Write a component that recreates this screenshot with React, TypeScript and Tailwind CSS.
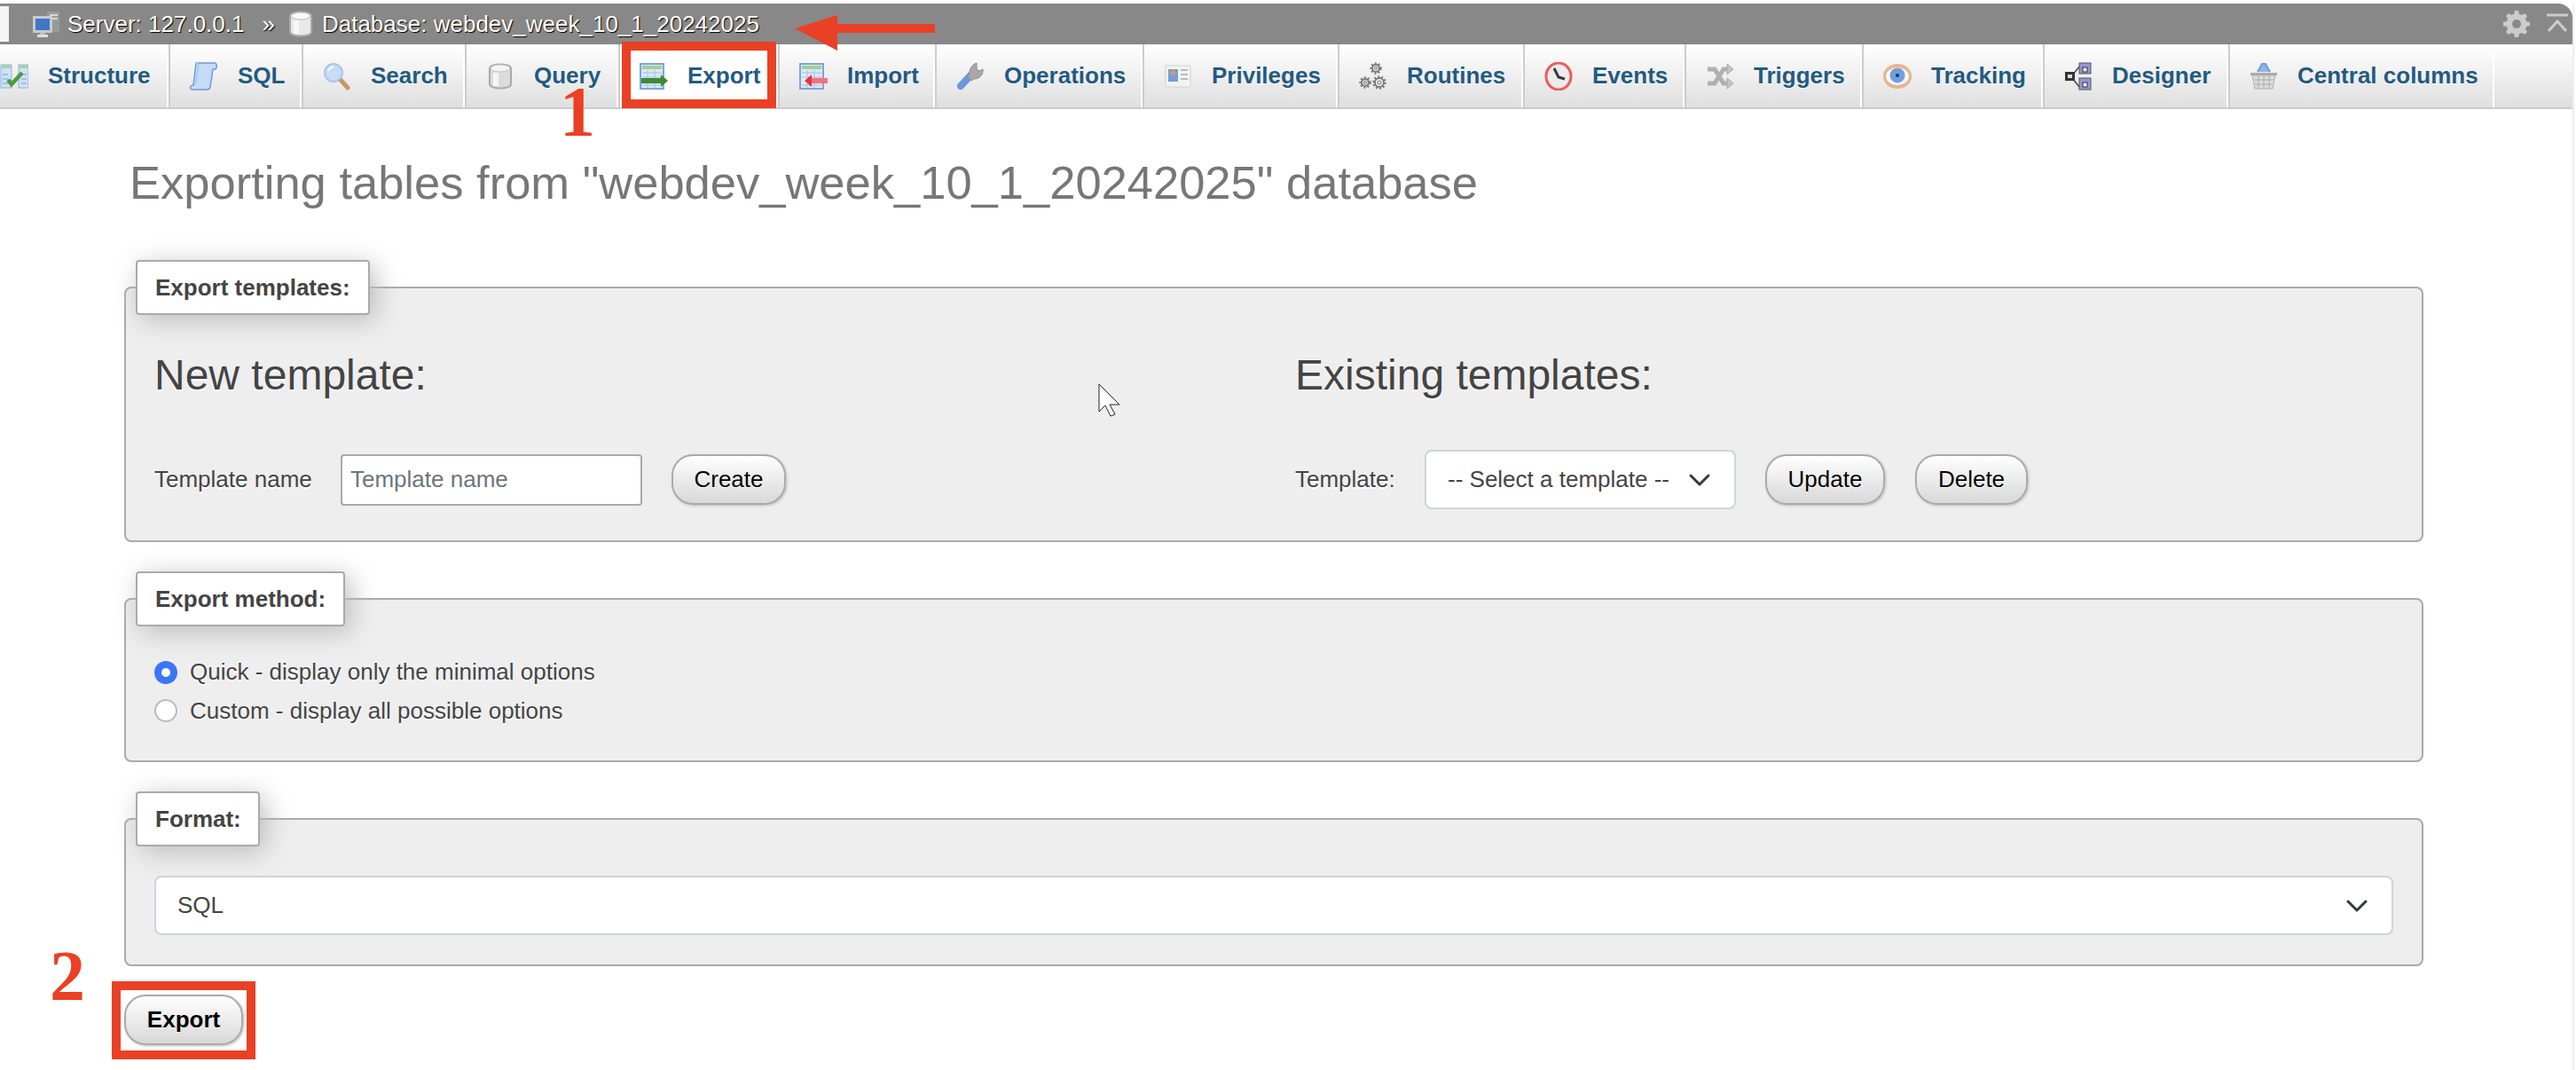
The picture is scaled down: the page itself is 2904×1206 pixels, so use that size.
import React from 'react';

const ico = 'w-8 h-8 shrink-0 blur-[0.4px]';

const ServerIcon = () => (
    <svg viewBox="0 0 32 32" className={ico}>
        <rect x="17" y="2" width="14" height="23" fill="#9a9a9a" />
        <rect x="20" y="5" width="9" height="2" fill="#d8d8d8" />
        <rect x="20" y="9" width="9" height="2" fill="#d8d8d8" />
        <rect x="26" y="14" width="3" height="3" fill="#5cb85c" />
        <rect x="1" y="7" width="22" height="19" fill="#c9c9c9" />
        <rect x="4" y="10" width="16" height="13" fill="#3f78c4" />
        <rect x="9" y="26" width="6" height="2" fill="#bbb" />
        <rect x="6" y="28" width="12" height="3" fill="#e0e0e0" />
    </svg>
);

const DbIcon = ({ light = false }: { light?: boolean }) => (
    <svg viewBox="0 0 32 32" className={ico}>
        <path d="M4 7c0-6 24-6 24 0v18c0 6-24 6-24 0z" fill={light ? '#dcdcdc' : '#e8e8e8'} stroke={light ? '#aaa' : '#aaa'} strokeWidth="2" />
        <ellipse cx="16" cy="7" rx="11" ry="4" fill={light ? '#f4f4f4' : '#fafafa'} stroke={light ? '#c4c4c4' : '#bbb'} />
        <rect x="8" y="12" width="6" height="15" fill="#fff" opacity="0.7" />
    </svg>
);

const StructureIcon = () => (
    <svg viewBox="0 0 32 32" className={ico}>
        <rect x="1" y="3" width="12" height="26" fill="#cfe0f6" stroke="#8fb2e0" />
        <rect x="21" y="3" width="11" height="26" fill="#cfe0f6" stroke="#8fb2e0" />
        <rect x="2" y="4" width="10" height="3" fill="#a6d59a" />
        <rect x="22" y="4" width="9" height="3" fill="#a6d59a" />
        <path d="M24 14h6M24 19h6M24 24h6M3 14h6M3 19h6M3 24h6" stroke="#8fb2e0" strokeWidth="1.5" />
        <path d="M9 20l4 5 12-13" fill="none" stroke="#4f9a3a" strokeWidth="4.500" />
    </svg>
);

const SqlIcon = () => (
    <svg viewBox="0 0 32 32" className={ico}>
        <path d="M7 1h21c3 0 3 7 0 7h-2l-3 20c-.5 2-2 3-4 3H3c-2 0-3-2-2-4l3-1z" fill="#c6dbf6" stroke="#6f9bd8" strokeWidth="1.5" />
        <path d="M7 1c3 0 3 4 2 8L6 26" fill="none" stroke="#a8c6ec" strokeWidth="1.5" />
    </svg>
);

const SearchIcon = () => (
    <svg viewBox="0 0 32 32" className={ico}>
        <path d="M19 19l9 10" stroke="#c49a62" strokeWidth="5" strokeLinecap="round" />
        <circle cx="12" cy="12" r="10" fill="#c7dcf6" stroke="#a9c6ea" strokeWidth="2" />
        <path d="M6 10c1-3 3-4 6-5" stroke="#fff" strokeWidth="2" fill="none" />
    </svg>
);

const ExportIcon = () => (
    <svg viewBox="0 0 32 32" className={ico}>
        <rect x="1" y="2" width="26" height="28" fill="#dde8f8" stroke="#7fa3d6" strokeWidth="2" />
        <rect x="3" y="4" width="22" height="4" fill="#9fd28e" />
        <path d="M3 12h22M3 17h22M3 26h22M9 9v20M17 9v20" stroke="#a6c0e6" />
        <rect x="2" y="18" width="23" height="6" fill="#3f8a35" />
        <path d="M24 14l8 7-8 7z" fill="#3f8a35" />
    </svg>
);

const ImportIcon = () => (
    <svg viewBox="0 0 32 32" className={ico}>
        <rect x="1" y="2" width="26" height="28" fill="#dde8f8" stroke="#7fa3d6" strokeWidth="2" />
        <rect x="3" y="4" width="22" height="4" fill="#9fd28e" />
        <path d="M3 12h22M3 17h22M3 26h22M9 9v20M17 9v20" stroke="#a6c0e6" />
        <rect x="13" y="18" width="19" height="6" fill="#f2727c" />
        <path d="M14 14l-8 7 8 7z" fill="#e8333f" />
    </svg>
);

const WrenchIcon = () => (
    <svg viewBox="0 0 32 32" className={ico}>
        <path d="M17 14L5 27" stroke="#6b97df" strokeWidth="8" strokeLinecap="round" />
        <path d="M15 12c0-5 3-9 8-11v7l3 2 4-2c1 6-4 11-10 11l-3 2-4-5z" fill="#a8a8a8" stroke="#8a8a8a" />
    </svg>
);

const PrivilegesIcon = () => (
    <svg viewBox="0 0 32 32" className={ico}>
        <path d="M2 4h28v23l-3 2-2-2-3 2-3-2-3 2-3-2-3 2-3-2-3 2-2-2z" fill="#f3f3f3" stroke="#d0d0d0" />
        <rect x="5" y="8" width="11" height="14" fill="#6f9fdc" />
        <circle cx="10.500" cy="12" r="3" fill="#d99a63" />
        <path d="M19 9h8M19 14h8M19 19h8" stroke="#b9b9b9" strokeWidth="2" />
    </svg>
);

const Gear = ({ x, y, r }: { x: number; y: number; r: number }) => (
    <g>
        <circle cx={x} cy={y} r={r} fill="none" stroke="#7c7c7c" strokeWidth="2" />
        <circle cx={x} cy={y} r={r + 1.500} fill="none" stroke="#7c7c7c" strokeWidth="2.500" strokeDasharray="2 2" />
        <circle cx={x} cy={y} r={r / 2.500} fill="#eee" stroke="#777" />
    </g>
);

const RoutinesIcon = () => (
    <svg viewBox="0 0 32 32" className={ico}>
        <Gear x={19} y={7} r={4} />
        <Gear x={7} y={23} r={4} />
        <Gear x={23} y={23} r={5} />
    </svg>
);

const EventsIcon = () => (
    <svg viewBox="0 0 32 32" className={ico}>
        <ellipse cx="16" cy="16" rx="14" ry="15" fill="#ececec" stroke="#ef5b5b" strokeWidth="3" />
        <path d="M11 7l5 10 7 2" fill="none" stroke="#3b3b3b" strokeWidth="3" />
    </svg>
);

const TriggersIcon = () => (
    <svg viewBox="0 0 32 32" className={ico}>
        <path d="M2 8h8l10 16h5M2 24h8L20 8h5" fill="none" stroke="#b0b0b0" strokeWidth="5" />
        <path d="M24 2l7 6-7 6zM24 18l7 6-7 6z" fill="#c5c5c5" stroke="#a9a9a9" />
    </svg>
);

const TrackingIcon = () => (
    <svg viewBox="0 0 32 32" className={ico}>
        <ellipse cx="16" cy="16" rx="16" ry="14" fill="#e8b48c" />
        <ellipse cx="16" cy="16" rx="13" ry="10" fill="#f7f7f7" />
        <circle cx="16" cy="15" r="8.500" fill="#6f9fe0" />
        <circle cx="16" cy="15" r="2" fill="#1f2f4f" />
    </svg>
);

const DesignerIcon = () => (
    <svg viewBox="0 0 32 32" className={ico}>
        <path d="M9 15L18 4M9 18l9 11" stroke="#444" strokeWidth="1.500" fill="none" />
        <rect x="1" y="11" width="11" height="10" fill="#333" />
        <rect x="4" y="14" width="5" height="4" fill="#ddd" />
        <rect x="17" y="1" width="13" height="12" fill="#9c95d6" stroke="#555" />
        <rect x="21" y="6" width="5" height="5" fill="#eee" stroke="#333" />
        <rect x="17" y="18" width="13" height="13" fill="#9c95d6" stroke="#555" />
        <rect x="21" y="23" width="5" height="5" fill="#eee" stroke="#333" />
    </svg>
);

const BasketIcon = () => (
    <svg viewBox="0 0 32 32" className={ico}>
        <path d="M9 11l5-9h4l5 9" fill="#8eb5e8" stroke="#6f9fdc" strokeWidth="2" />
        <path d="M1 12h30v3H1z" fill="#aaa" />
        <path d="M3 15h26l-3 15H6z" fill="#dcdcdc" stroke="#b0b0b0" />
        <path d="M5 20h22M6 25h20M10 15v15M16 15v15M22 15v15" stroke="#aaa" />
    </svg>
);

const Chevron = () => (
    <svg viewBox="0 0 16 16" className="h-8 w-8 shrink-0" fill="none" stroke="#343a40" strokeWidth="1.500" strokeLinecap="round" strokeLinejoin="round">
        <path d="M3 5.500l5 5 5-5" />
    </svg>
);

const tabs = [
    { label: 'Structure', icon: <StructureIcon />, cls: 'w-[214px] -ml-[24px]' },
    { label: 'SQL', icon: <SqlIcon />, cls: 'w-[150px]' },
    { label: 'Search', icon: <SearchIcon />, cls: 'w-[184px]' },
    { label: 'Query', icon: <DbIcon light />, cls: 'w-[173px]' },
    { label: 'Export', icon: <ExportIcon />, cls: 'w-[180px] bg-white' },
    { label: 'Import', icon: <ImportIcon />, cls: 'w-[177px]' },
    { label: 'Operations', icon: <WrenchIcon />, cls: 'w-[234px]' },
    { label: 'Privileges', icon: <PrivilegesIcon />, cls: 'w-[220px]' },
    { label: 'Routines', icon: <RoutinesIcon />, cls: 'w-[209px]' },
    { label: 'Events', icon: <EventsIcon />, cls: 'w-[182px]' },
    { label: 'Triggers', icon: <TriggersIcon />, cls: 'w-[200px]' },
    { label: 'Tracking', icon: <TrackingIcon />, cls: 'w-[204px]' },
    { label: 'Designer', icon: <DesignerIcon />, cls: 'w-[209px]' },
    { label: 'Central columns', icon: <BasketIcon />, cls: 'w-[300px]' },
];

const Btn = ({ children, cls, bold = false }: { children: React.ReactNode; cls: string; bold?: boolean }) => (
    <button className={`h-[57px] rounded-[24px] border-2 border-[#aaa] bg-gradient-to-b from-white to-[#d8d8d8] text-[26px] text-black [text-shadow:0_1px_0_#fff] shadow-[1px_1px_3px_#bbb] ${bold ? 'font-bold' : ''} ${cls}`}>
        {children}
    </button>
);

const Box = ({ title, legendCls, children }: { title: string; legendCls: string; children: React.ReactNode }) => (
    <fieldset className="rounded-lg border-2 border-[#aaa] bg-[#eee] px-[32px] text-[26px] text-[#444] [text-shadow:0_2px_0_#fff]">
        <legend className={`-ml-[21px] h-[62px] rounded border-2 border-[#aaa] bg-white pl-[20px] text-[26px] leading-[58px] font-bold shadow-[6px_6px_30px_#bbb] [text-shadow:none] ${legendCls}`}>
            {title}
        </legend>
        {children}
    </fieldset>
);

const Radio = ({ on, label }: { on?: boolean; label: string }) => (
    <label className="flex h-[43.500px] items-center gap-[14px]">
        {on ? (
            <span className="flex h-[26px] w-[26px] items-center justify-center rounded-full bg-[#3b76f6]">
                <span className="h-[10px] w-[10px] rounded-full bg-white" />
            </span>
        ) : (
            <span className="h-[26px] w-[26px] rounded-full border-2 border-[#bbb] bg-white" />
        )}
        {label}
    </label>
);

export default function App() {
    return (
        <div className="relative h-[1206px] w-[2904px] overflow-hidden bg-white pt-[4px] font-['Liberation_Sans',Arial,sans-serif]">
            <div className="h-[1202px] w-[2902px] border-r-2 border-[#eee]">
                {/* Breadcrumb */}
                <div className="flex h-[46px] w-[2900px] items-center rounded-tr-2xl bg-[#888] text-[26px] text-white [text-shadow:1px_1px_1px_#000]">
                    <div className="h-[40px] w-[10px] bg-[#f4f4f4]" />
                    <div className="ml-[26px]"><ServerIcon /></div>
                    <span className="ml-[8px]">Server: 127.0.0.1</span>
                    <span className="ml-[20px]">»</span>
                    <div className="ml-[13px]"><DbIcon /></div>
                    <span className="ml-[8px]">Database: webdev_week_10_1_20242025</span>
                    <svg viewBox="0 0 30 30" className="ml-auto h-[30px] w-[30px] blur-[0.4px]" fill="#ccc">
                        <path d="M13 0h4l1 4 3 1 3-2 3 3-2 3 1 3 4 1v4l-4 1-1 3 2 3-3 3-3-2-3 1-1 4h-4l-1-4-3-1-3 2-3-3 2-3-1-3-4-1v-4l4-1 1-3-2-3 3-3 3 2 3-1z" />
                        <circle cx="15" cy="15" r="5" fill="#888" />
                    </svg>
                    <svg viewBox="0 0 24 24" className="mr-[5px] ml-[19px] h-[24px] w-[24px]" fill="none" stroke="#ccc" strokeWidth="3">
                        <path d="M0 2h24M2 20l10-11 10 11" />
                    </svg>
                </div>

                {/* Tabs */}
                <div className="flex h-[73px] w-[2900px] border-b-2 border-[#ccc] bg-gradient-to-b from-white to-[#dfdfdf]">
                    {tabs.map(t => (
                        <div key={t.label} className={`flex shrink-0 items-center gap-[22px] border-r-2 border-l-2 border-r-white border-l-[#ccc] pl-[22px] text-[26px] font-bold whitespace-nowrap text-[#235a81] [text-shadow:0_1px_0_#fff] ${t.cls}`}>
                            {t.icon}
                            {t.label}
                        </div>
                    ))}
                </div>

                <div className="w-[2732px] pl-[140px]">
                    <h2 className="ml-[6px] flex h-[170px] items-center pb-[3px] text-[52.500px] font-normal whitespace-nowrap text-[#777]">
                        Exporting tables from "webdev_week_10_1_20242025" database
                    </h2>

                    <div className="flex flex-col gap-[33px]">
                        <Box title="Export templates:" legendCls="w-[264px]">
                            <div className="grid grid-cols-[1286px_1fr] pt-[40px] pb-[35px]">
                                <div>
                                    <h3 className="h-[56px] text-[48px] leading-[56px] font-normal">New template:</h3>
                                    <div className="mt-[56px] flex h-[67px] items-center">
                                        <span className="w-[210px]">Template name</span>
                                        <input
                                            placeholder="Template name"
                                            className="h-[58px] w-[340px] rounded border-2 border-[#aaa] bg-white px-[9px] text-[26px] placeholder:text-[#6c757d]"
                                        />
                                        <Btn cls="ml-[33px] w-[129px]">Create</Btn>
                                    </div>
                                </div>
                                <div>
                                    <h3 className="h-[56px] text-[48px] leading-[56px] font-normal">Existing templates:</h3>
                                    <div className="mt-[56px] flex h-[67px] items-center">
                                        <span className="w-[146px]">Template:</span>
                                        <div className="flex h-[67px] w-[351px] items-center justify-between rounded-lg border-2 border-[#ced4da] bg-white pr-[23px] pl-[24px]">
                                            -- Select a template --
                                            <Chevron />
                                        </div>
                                        <Btn cls="ml-[33px] w-[135px]">Update</Btn>
                                        <Btn cls="ml-[34px] w-[127px]">Delete</Btn>
                                    </div>
                                </div>
                            </div>
                        </Box>

                        <Box title="Export method:" legendCls="w-[236px]">
                            <div className="pt-[30px] pb-[34px]">
                                <Radio on label="Quick - display only the minimal options" />
                                <Radio label="Custom - display all possible options" />
                            </div>
                        </Box>

                        <Box title="Format:" legendCls="w-[140px]">
                            <div className="py-[33px]">
                                <div className="flex h-[67px] items-center justify-between rounded-lg border-2 border-[#ced4da] bg-white pr-[23px] pl-[24px]">
                                    SQL
                                    <Chevron />
                                </div>
                            </div>
                        </Box>
                    </div>

                    <Btn bold cls="mt-[32px] w-[134px]">Export</Btn>
                </div>
            </div>

            {/* Annotations drawn over the screenshot */}
            <div className="absolute top-[47px] left-[701px] h-[75px] w-[174px] border-10 border-[#ea4025]" />
            <div className="absolute top-[1106px] left-[126px] h-[88px] w-[162px] border-10 border-[#ea4025]" />
            <svg viewBox="0 0 158 40" className="absolute top-[17px] left-[896px] h-[40px] w-[158px]" fill="#ea4025">
                <path d="M0 15L48 0v10h110v10H48v20z" />
            </svg>
            <span className="absolute top-[86px] left-[631px] font-['Liberation_Serif',serif] text-[80px] leading-none font-bold text-[#ea4025]">1</span>
            <span className="absolute top-[1060px] left-[56px] font-['Liberation_Serif',serif] text-[80px] leading-none font-bold text-[#ea4025]">2</span>
            <svg viewBox="0 0 26 38" className="absolute top-[432px] left-[1238px] h-[38px] w-[26px]" fill="#fff" stroke="#222" strokeWidth="1">
                <path d="M1 1v31l7-7 6 12 5-2-6-11h11z" />
            </svg>
        </div>
    );
}
